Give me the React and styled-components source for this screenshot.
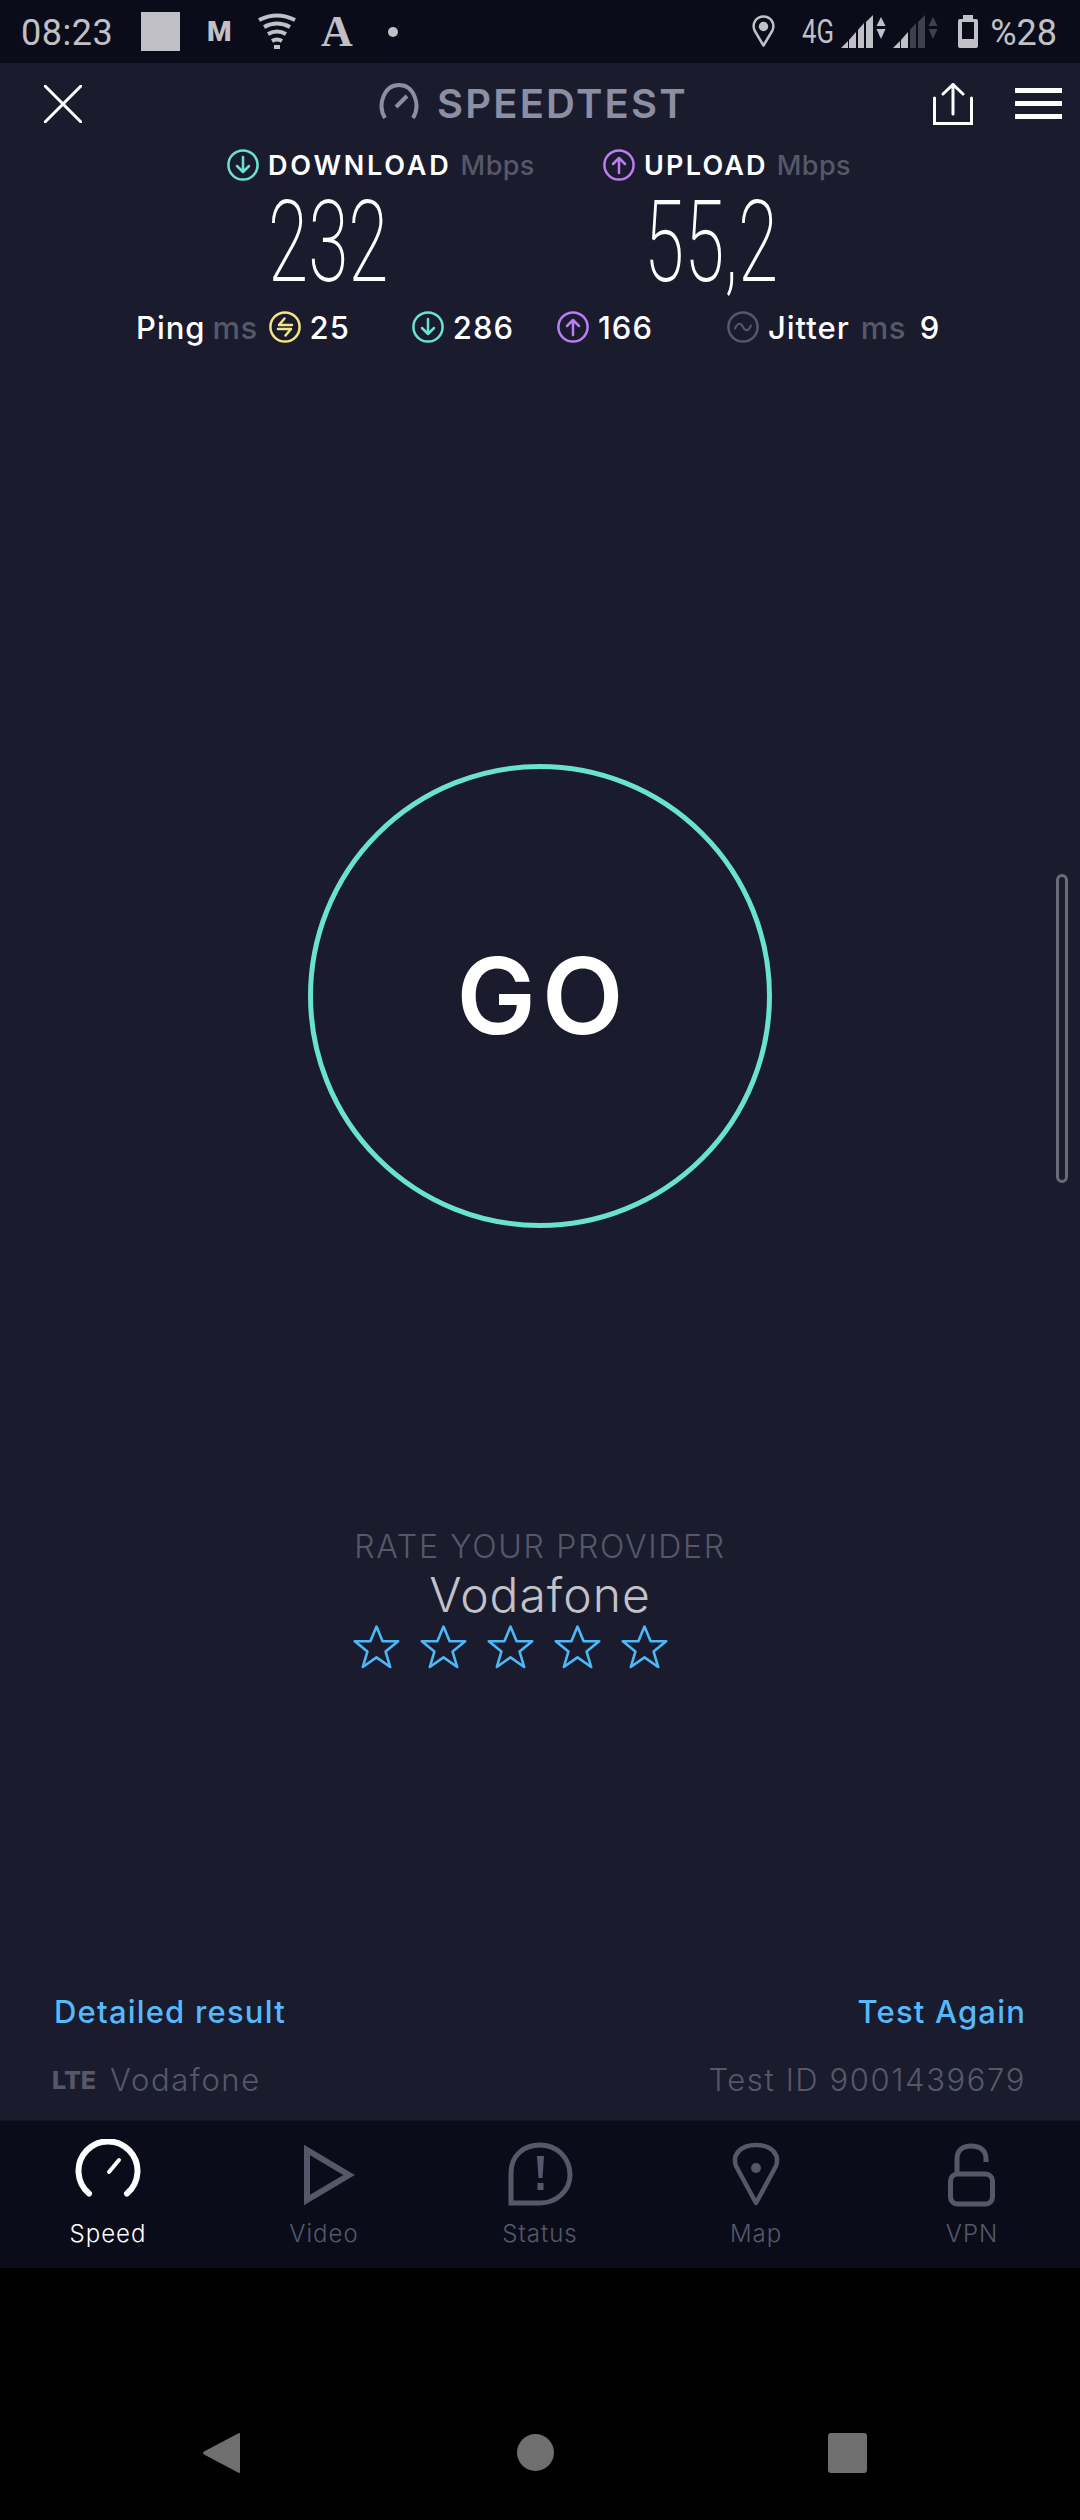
import React from "react";
import styled, { createGlobalStyle } from "styled-components";

const teal = "#69e2d0";
const purple = "#bd7df2";
const yellow = "#f6e384";
const muted = "#565869";
const blue = "#55b9fb";
const statusGrey = "#c1c0c6";
const uiFont = `Inter, "Open Sans", sans-serif`;

const GlobalStyle = createGlobalStyle`
  html, body {
    margin: 0;
    padding: 0;
    background: #000;
  }
  * {
    box-sizing: border-box;
  }
`;

const Screen = styled.div`
  width: 1080px;
  height: 2520px;
  display: flex;
  flex-direction: column;
  font-family: ${uiFont};
  overflow: hidden;
`;

/* status bar */
const StatusBar = styled.div`
  height: 63px;
  flex: none;
  background: #0a0c1a;
  color: ${statusGrey};
  display: flex;
  align-items: center;
  justify-content: space-between;
  padding: 0 23px 0 21px;
  font-family: Roboto, sans-serif;
`;

const StatusGroup = styled.div`
  display: flex;
  align-items: center;
`;

const Clock = styled.span`
  font-size: 36px;
  letter-spacing: 0.5px;
  line-height: 1;
  width: 120px;
  margin-top: 2px;
`;

const Square = styled.div`
  width: 39px;
  height: 39px;
  background: ${statusGrey};
`;

const GmailMark = styled.span`
  font-weight: 900;
  font-size: 28px;
  line-height: 1;
  margin-left: 27px;
  width: 24px;
`;

const SerifMark = styled.span`
  font-family: "Liberation Serif", serif;
  font-weight: 700;
  font-size: 44px;
  line-height: 1;
  margin-left: 25px;
  width: 32px;
`;

const Dot = styled.span`
  width: 10px;
  height: 10px;
  border-radius: 50%;
  background: ${statusGrey};
  margin-left: 35px;
`;

const NetworkLabel = styled.span`
  font-size: 33px;
  line-height: 1;
  width: 32px;
  margin-left: 27px;
  display: inline-block;
  transform: scaleX(0.78);
  transform-origin: left center;
  white-space: nowrap;
`;

const BatteryLevel = styled.span`
  font-size: 36px;
  line-height: 1;
  margin-left: 12px;
  margin-top: 2px;
`;

const StatusIcon = styled.svg`
  display: block;
  flex: none;
  margin-left: ${(p) => p.$left || 0}px;
`;

/* main area */
const Main = styled.div`
  position: relative;
  height: 2057px;
  flex: none;
  background: #1a1c2e;
  display: flex;
  flex-direction: column;
`;

const Header = styled.div`
  height: 78px;
  flex: none;
  display: flex;
  align-items: center;
  padding: 3px 18px 0 44px;
`;

const Title = styled.div`
  display: flex;
  align-items: center;
  gap: 17px;
  margin-left: 296px;
  margin-right: auto;
  color: #8c8ea4;
  font-size: 40px;
  letter-spacing: 2.2px;
  font-weight: 600;
  line-height: 1;
`;

const TitleGauge = styled.svg`
  display: block;
  margin-top: -6px;
`;

const MenuButton = styled.div`
  width: 47px;
  height: 31px;
  margin-left: 42px;
  display: flex;
  flex-direction: column;
  justify-content: space-between;
  span {
    display: block;
    height: 5px;
    background: #fff;
  }
`;

const TotalsRow = styled.div`
  display: flex;
  padding-left: 227px;
`;

const Total = styled.div`
  width: 376px;
`;

const TotalLabel = styled.div`
  height: 48px;
  display: flex;
  align-items: center;
  gap: 9px;
  font-size: 27px;
  font-weight: 600;
  letter-spacing: ${(p) => p.$spacing}px;
  color: #fff;
  white-space: nowrap;
`;

const Unit = styled.span`
  color: ${muted};
  font-weight: 500;
  letter-spacing: 0.4px;
`;

const TotalValue = styled.div`
  height: 106px;
  margin-left: 41px;
  font-family: Roboto, sans-serif;
  font-weight: 200;
  font-size: 114px;
  line-height: 106px;
  color: #fff;
  transform: scaleX(0.64);
  transform-origin: left center;
  white-space: nowrap;
`;

const DetailRow = styled.div`
  height: 66px;
  display: flex;
  align-items: center;
  padding: 0 0 2px 136px;
  font-size: 31px;
  letter-spacing: 1px;
  font-weight: 500;
  color: #fff;
  white-space: nowrap;
`;

const DetailItem = styled.span`
  display: inline-flex;
  margin-left: ${(p) => p.$left || 0}px;
`;

const GoButton = styled.div`
  width: 464px;
  height: 464px;
  margin: 403px auto 0;
  flex: none;
  border: 5px solid ${teal};
  border-radius: 50%;
  display: flex;
  align-items: center;
  justify-content: center;
  color: #fff;
  font-size: 106px;
  letter-spacing: 6px;
  padding-left: 6px;
  font-weight: 600;
  line-height: 1;
`;

const Scrollbar = styled.div`
  position: absolute;
  left: 1056px;
  top: 811px;
  width: 12px;
  height: 309px;
  border: 3px solid #6a6b78;
  border-radius: 6px;
`;

const RateBlock = styled.div`
  width: 372px;
  margin: 299px 0 0 354px;
  display: flex;
  flex-direction: column;
`;

const RateTitle = styled.div`
  height: 40px;
  line-height: 40px;
  font-size: 32px;
  letter-spacing: 1.7px;
  font-weight: 300;
  color: ${muted};
  text-align: center;
  white-space: nowrap;
`;

const Provider = styled.div`
  height: 56px;
  line-height: 56px;
  font-size: 48px;
  letter-spacing: 1px;
  font-weight: 300;
  color: #c2c2c8;
  text-align: center;
`;

const Stars = styled.div`
  display: flex;
  gap: 20px;
  margin: 2px 0 0 -1px;
`;

const Footer = styled.div`
  margin-top: auto;
  padding: 0 54px 16px 54px;
  display: grid;
  grid-template-columns: 1fr 1fr;
  row-gap: 20px;
  align-items: center;
  font-size: 31px;
  line-height: 48px;
`;

const FooterLink = styled.a`
  color: ${blue};
  font-weight: 500;
  letter-spacing: 1.2px;
  text-align: ${(p) => p.$align || "left"};
`;

const FooterInfo = styled.div`
  color: ${muted};
  font-weight: 300;
  letter-spacing: 1.6px;
  display: flex;
  align-items: center;
  justify-content: ${(p) => (p.$align === "right" ? "flex-end" : "flex-start")};
  gap: 14px;
`;

const TechBadge = styled.span`
  font-weight: 800;
  font-size: 25px;
  letter-spacing: 0;
  margin-left: -2px;
`;

/* bottom tabs */
const TabBar = styled.div`
  height: 148px;
  flex: none;
  background: #0a0c1a;
  border-top: 1px solid #14162a;
  display: grid;
  grid-template-columns: repeat(5, 216px);
`;

const Tab = styled.div`
  display: flex;
  flex-direction: column;
  align-items: center;
  color: ${(p) => (p.$active ? "#fff" : muted)};
  font-size: 24px;
  letter-spacing: 1px;
  font-weight: 300;
`;

const TabIcon = styled.svg`
  display: block;
  margin-top: 18px;
  width: 72px;
  height: 68px;
`;

const TabLabel = styled.span`
  margin-top: 12px;
  line-height: 30px;
`;

/* system navigation */
const SoftKeys = styled.div`
  height: 252px;
  flex: none;
  background: #000;
  display: flex;
  align-items: flex-start;
  padding: 164px 0 0 203px;
`;

const SoftKey = styled.svg`
  display: block;
  margin-left: ${(p) => p.$left || 0}px;
  margin-top: ${(p) => p.$top || 0}px;
`;

function Signal({ dim, left }) {
  const a = "#c1c0c6";
  const b = "#3f404d";
  return (
    <StatusIcon $left={left} width="45" height="34" viewBox="0 0 45 34">
      <polygon points="0,33 7,33 7,26" fill={a} />
      <polygon points="8,33 15,33 15,17 8,25" fill={a} />
      <polygon points="17,33 23,33 23,8 17,15" fill={dim ? b : a} />
      <polygon points="25,33 32,33 32,0 25,7" fill={dim ? b : a} />
      <polygon points="40,2 44.5,11 35.5,11" fill={dim ? b : a} />
      <polygon points="35.5,14 44.5,14 40,24" fill={dim ? b : a} />
    </StatusIcon>
  );
}

function MetricIcon({ color, kind }) {
  return (
    <svg width="32" height="32" viewBox="0 0 32 32" fill="none" stroke={color} strokeWidth="2.5" strokeLinecap="round" strokeLinejoin="round" style={{ flex: "none" }}>
      <circle cx="16" cy="16" r="14.6" />
      {kind === "down" && <path d="M16 8V23M10 17L16 23L22 17" />}
      {kind === "up" && <path d="M16 24V9M10 15L16 9L22 15" />}
      {kind === "ping" && <path d="M23 14H10L15.5 7.5M9 18H22L16.5 24.5" />}
      {kind === "jitter" && <path d="M8 17.5C11 11 14 12 16 16C18 20 21 21 24 14.5" strokeWidth="2" />}
    </svg>
  );
}

function Star() {
  return (
    <svg width="47" height="44" viewBox="0 0 47 44" fill="none" stroke="#4db8f8" strokeWidth="2.6" strokeLinejoin="round" style={{ display: "block", flex: "none" }}>
      <polygon points="23.5,1.6 29.6,16.2 45.2,16.2 32.6,26.6 37.2,42 23.5,32.4 9.8,42 14.4,26.6 1.8,16.2 17.4,16.2" />
    </svg>
  );
}

export default function App() {
  return (
    <Screen>
      <GlobalStyle />
      <StatusBar>
        <StatusGroup>
          <Clock>08:23</Clock>
          <Square />
          <GmailMark>M</GmailMark>
          <StatusIcon $left={27} width="38" height="37" viewBox="0 0 38 37" fill="none" stroke="#c1c0c6">
            <path d="M1 7Q19 -2 37 7" strokeWidth="4" />
            <path d="M6 14Q19 7 32 14" strokeWidth="4" />
            <path d="M10 21Q19 16 28 21" strokeWidth="4" />
            <path d="M14 28Q19 25 24 28" strokeWidth="4" />
            <path d="M16 34H22" strokeWidth="4" />
          </StatusIcon>
          <SerifMark>A</SerifMark>
          <Dot />
        </StatusGroup>
        <StatusGroup>
          <StatusIcon width="23" height="33" viewBox="0 0 23 33" fill="none" stroke="#c1c0c6" strokeWidth="2.5">
            <path d="M11.5 30.5L2.6 15.5C-0.5 8 4.5 1.5 11.5 1.5C18.5 1.5 23.5 8 20.4 15.5Z" strokeLinejoin="round" />
            <circle cx="11.5" cy="11.5" r="3.5" fill="#c1c0c6" />
          </StatusIcon>
          <NetworkLabel>4G</NetworkLabel>
          <Signal left={7} />
          <Signal dim left={7} />
          <StatusIcon $left={20} width="20" height="33" viewBox="0 0 20 33">
            <path d="M5 0H15V4H18A2 2 0 0 1 20 6V31A2 2 0 0 1 18 33H2A2 2 0 0 1 0 31V6A2 2 0 0 1 2 4H5Z" fill="#c1c0c6" />
            <rect x="4" y="7" width="12" height="17" fill="#0a0c1a" />
          </StatusIcon>
          <BatteryLevel>%28</BatteryLevel>
        </StatusGroup>
      </StatusBar>

      <Main>
        <Header>
          <svg width="38" height="38" viewBox="0 0 38 38" stroke="#fff" strokeWidth="3" strokeLinecap="round">
            <path d="M1 1L37 37M37 1L1 37" />
          </svg>
          <Title>
            <TitleGauge width="42" height="36" viewBox="0 0 42 36" fill="none" stroke="#8c8ea4" strokeWidth="4">
              <path d="M7 35C-1 22 6 2 21 2C36 2 43 22 35 35" />
              <path d="M18 24L29 13" />
            </TitleGauge>
            <span>SPEEDTEST</span>
          </Title>
          <svg width="40" height="42" viewBox="0 0 40 42" fill="none" stroke="#fff" strokeWidth="3" strokeLinecap="round">
            <path d="M1.5 15V40.5H38.5V15" />
            <path d="M20 31V2M10 11L20 1.5L30 11" />
          </svg>
          <MenuButton>
            <span />
            <span />
            <span />
          </MenuButton>
        </Header>

        <TotalsRow>
          <Total>
            <TotalLabel $spacing={2.8}>
              <MetricIcon color={teal} kind="down" />
              <span>DOWNLOAD</span>
              <Unit>Mbps</Unit>
            </TotalLabel>
            <TotalValue>232</TotalValue>
          </Total>
          <Total>
            <TotalLabel $spacing={2.2}>
              <MetricIcon color={purple} kind="up" />
              <span>UPLOAD</span>
              <Unit>Mbps</Unit>
            </TotalLabel>
            <TotalValue>55,2</TotalValue>
          </Total>
        </TotalsRow>

        <DetailRow>
          <DetailItem>Ping</DetailItem>
          <DetailItem $left={7}>
            <Unit>ms</Unit>
          </DetailItem>
          <DetailItem $left={11}>
            <MetricIcon color={yellow} kind="ping" />
          </DetailItem>
          <DetailItem $left={9}>25</DetailItem>
          <DetailItem $left={62}>
            <MetricIcon color={teal} kind="down" />
          </DetailItem>
          <DetailItem $left={9}>286</DetailItem>
          <DetailItem $left={43}>
            <MetricIcon color={purple} kind="up" />
          </DetailItem>
          <DetailItem $left={9}>166</DetailItem>
          <DetailItem $left={74}>
            <MetricIcon color={muted} kind="jitter" />
          </DetailItem>
          <DetailItem $left={9}>Jitter</DetailItem>
          <DetailItem $left={11}>
            <Unit>ms</Unit>
          </DetailItem>
          <DetailItem $left={14}>9</DetailItem>
        </DetailRow>

        <GoButton>GO</GoButton>
        <Scrollbar />

        <RateBlock>
          <RateTitle>RATE YOUR PROVIDER</RateTitle>
          <Provider>Vodafone</Provider>
          <Stars>
            {[0, 1, 2, 3, 4].map((i) => (
              <Star key={i} />
            ))}
          </Stars>
        </RateBlock>

        <Footer>
          <FooterLink>Detailed result</FooterLink>
          <FooterLink $align="right">Test Again</FooterLink>
          <FooterInfo>
            <TechBadge>LTE</TechBadge>
            <span>Vodafone</span>
          </FooterInfo>
          <FooterInfo $align="right">Test ID 9001439679</FooterInfo>
        </Footer>
      </Main>

      <TabBar>
        <Tab $active>
          <TabIcon viewBox="0 0 72 68" fill="none" stroke="#fff" strokeWidth="6" strokeLinecap="round">
            <path d="M17 54.5A29.5 29.5 0 1 1 55 54.5" />
            <path d="M37 33L47 21" strokeWidth="4" />
          </TabIcon>
          <TabLabel>Speed</TabLabel>
        </Tab>
        <Tab>
          <TabIcon viewBox="0 0 72 68" fill="none" stroke={muted} strokeWidth="6">
            <path d="M19 11V61L61 36Z" />
          </TabIcon>
          <TabLabel>Video</TabLabel>
        </Tab>
        <Tab>
          <TabIcon viewBox="0 0 72 68" fill="none" stroke={muted} strokeWidth="5">
            <path d="M7 64V34C7 16 20 6 36 6C52 6 66 18 66 36C66 52 52 64 36 64Z" />
            <path d="M33 17H40L38.5 39H34.5Z" fill={muted} stroke="none" />
            <rect x="33.5" y="44" width="6" height="7" fill={muted} stroke="none" />
          </TabIcon>
          <TabLabel>Status</TabLabel>
        </Tab>
        <Tab>
          <TabIcon viewBox="0 0 72 68" fill="none" stroke={muted} strokeWidth="4.5">
            <path d="M36 64L16 27C12 16 20 6 36 6C52 6 60 16 56 27Z" strokeLinejoin="round" />
            <circle cx="36" cy="29" r="5" fill={muted} stroke="none" />
          </TabIcon>
          <TabLabel>Map</TabLabel>
        </Tab>
        <Tab>
          <TabIcon viewBox="0 0 72 68" fill="none" stroke={muted} strokeWidth="5">
            <path d="M21 34V20C21 11 27 7 35 7C44 7 50 11 50 20V23" />
            <rect x="14.5" y="35" width="42" height="30" rx="7" />
          </TabIcon>
          <TabLabel>VPN</TabLabel>
        </Tab>
      </TabBar>

      <SoftKeys>
        <SoftKey width="37" height="42" viewBox="0 0 37 42">
          <path d="M36 1L1 19.5A2 2 0 0 0 1 22.5L36 41A1 1 0 0 0 37 40V2A1 1 0 0 0 36 1Z" fill="#6f6f6f" />
        </SoftKey>
        <SoftKey $left={277} $top={2} width="37" height="37" viewBox="0 0 37 37">
          <circle cx="18.5" cy="18.5" r="18.5" fill="#6f6f6f" />
        </SoftKey>
        <SoftKey $left={274} $top={1} width="39" height="40" viewBox="0 0 39 40">
          <rect width="39" height="40" rx="3" fill="#6f6f6f" />
        </SoftKey>
      </SoftKeys>
    </Screen>
  );
}
